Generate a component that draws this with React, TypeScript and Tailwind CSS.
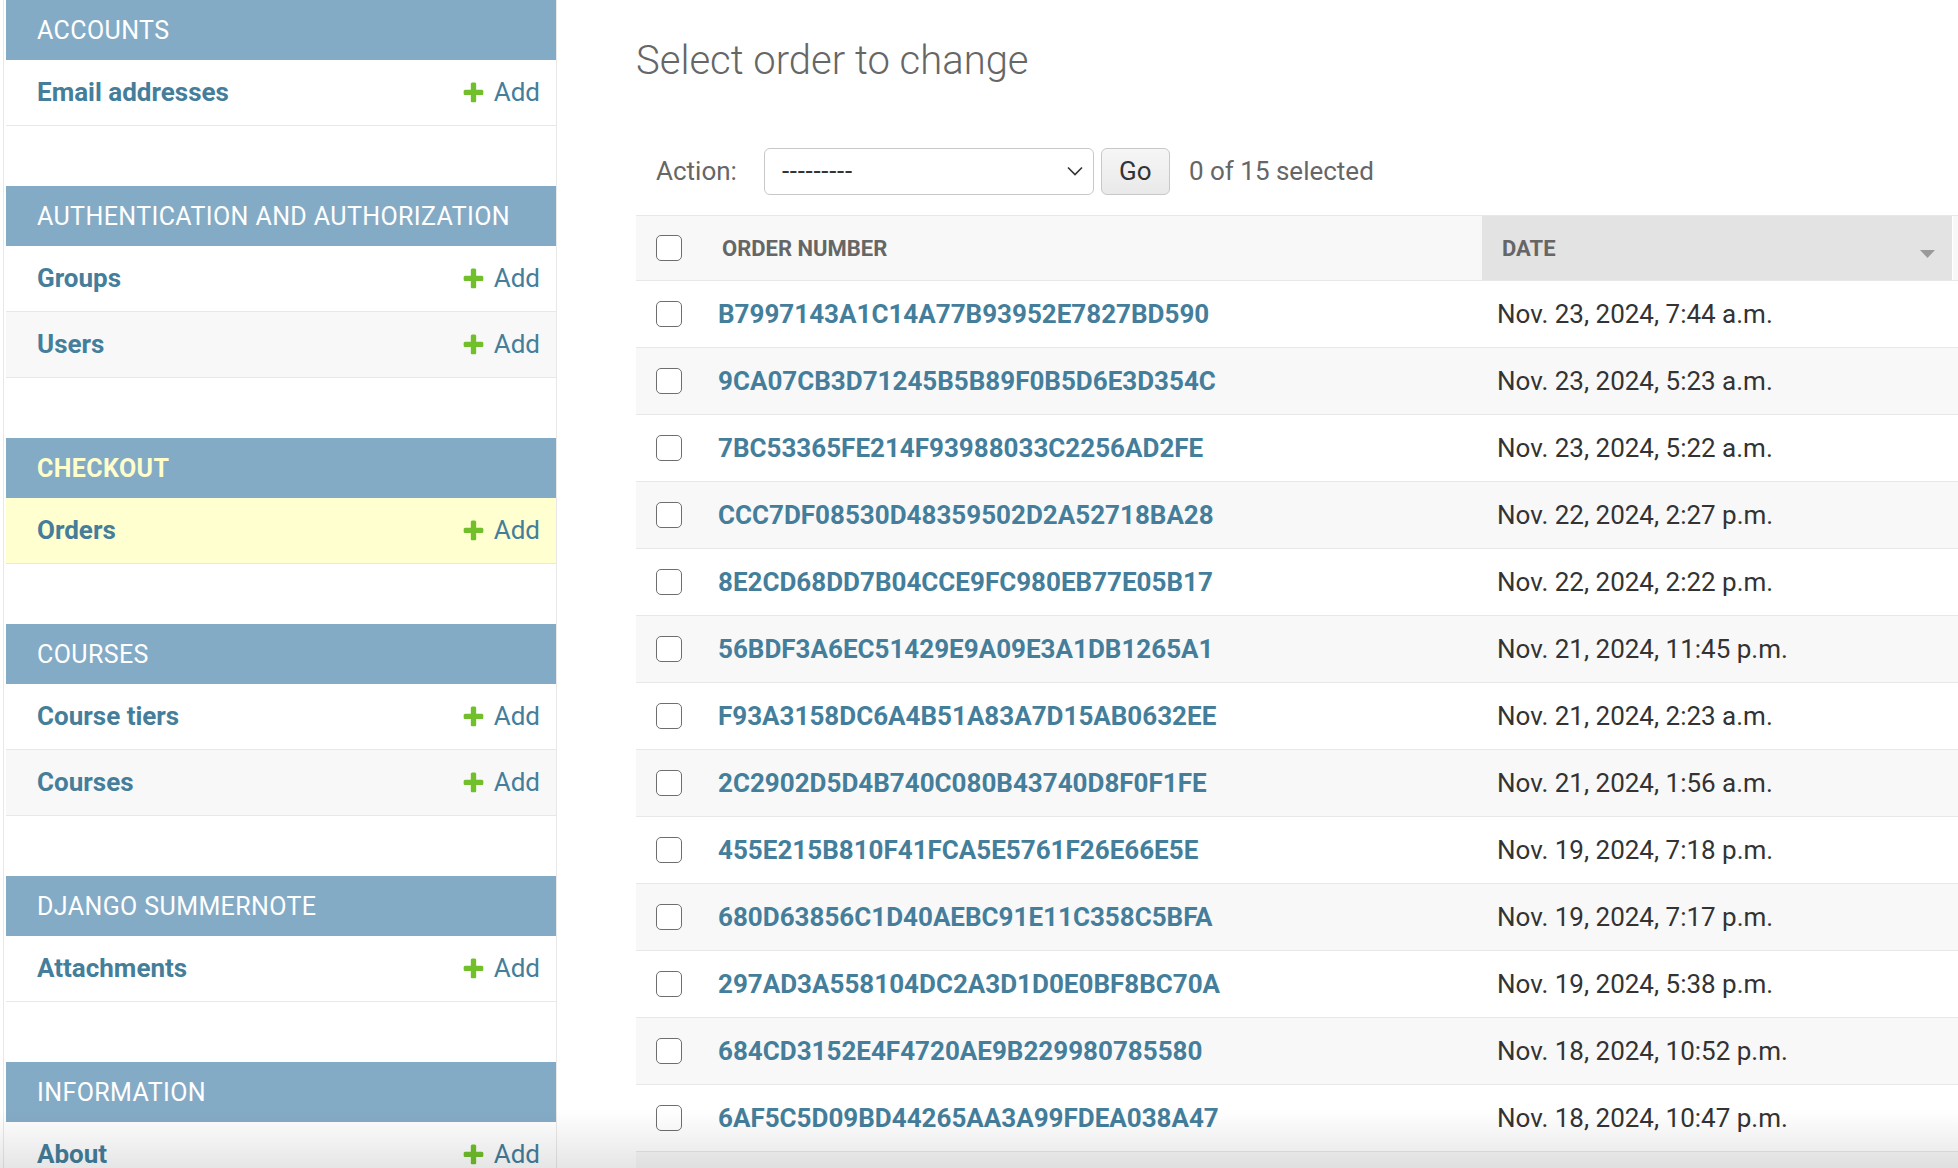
import React from "react";

const PlusIcon = () => (
  <svg width="25" height="25" viewBox="0 0 1792 1792" className="shrink-0">
    <path
      fill="#70bf2b"
      d="M1600 796v192q0 40-28 68t-68 28h-416v416q0 40-28 68t-68 28h-192q-40 0-68-28t-28-68v-416h-416q-40 0-68-28t-28-68v-192q0-40 28-68t68-28h416v-416q0-40 28-68t68-28h192q40 0 68 28t28 68v416h416q40 0 68 28t28 68z"
    />
  </svg>
);

type Mod = { caption: string; current?: boolean; rows: { name: string; selected?: boolean }[] };

const modules: Mod[] = [
  { caption: "Accounts", rows: [{ name: "Email addresses" }] },
  { caption: "Authentication and Authorization", rows: [{ name: "Groups" }, { name: "Users" }] },
  { caption: "Checkout", current: true, rows: [{ name: "Orders", selected: true }] },
  { caption: "Courses", rows: [{ name: "Course tiers" }, { name: "Courses" }] },
  { caption: "Django Summernote", rows: [{ name: "Attachments" }] },
  { caption: "Information", rows: [{ name: "About" }] },
];

const orders: [string, string][] = [
  ["B7997143A1C14A77B93952E7827BD590", "Nov. 23, 2024, 7:44 a.m."],
  ["9CA07CB3D71245B5B89F0B5D6E3D354C", "Nov. 23, 2024, 5:23 a.m."],
  ["7BC53365FE214F93988033C2256AD2FE", "Nov. 23, 2024, 5:22 a.m."],
  ["CCC7DF08530D48359502D2A52718BA28", "Nov. 22, 2024, 2:27 p.m."],
  ["8E2CD68DD7B04CCE9FC980EB77E05B17", "Nov. 22, 2024, 2:22 p.m."],
  ["56BDF3A6EC51429E9A09E3A1DB1265A1", "Nov. 21, 2024, 11:45 p.m."],
  ["F93A3158DC6A4B51A83A7D15AB0632EE", "Nov. 21, 2024, 2:23 a.m."],
  ["2C2902D5D4B740C080B43740D8F0F1FE", "Nov. 21, 2024, 1:56 a.m."],
  ["455E215B810F41FCA5E5761F26E66E5E", "Nov. 19, 2024, 7:18 p.m."],
  ["680D63856C1D40AEBC91E11C358C5BFA", "Nov. 19, 2024, 7:17 p.m."],
  ["297AD3A558104DC2A3D1D0E0BF8BC70A", "Nov. 19, 2024, 5:38 p.m."],
  ["684CD3152E4F4720AE9B229980785580", "Nov. 18, 2024, 10:52 p.m."],
  ["6AF5C5D09BD44265AA3A99FDEA038A47", "Nov. 18, 2024, 10:47 p.m."],
];

const Checkbox = () => (
  <div className="w-[26px] h-[26px] rounded-[5px] border-[1.5px] border-[#6e6e6e] bg-white" />
);

export default function App() {
  return (
    <div className="relative flex h-screen w-full overflow-hidden bg-white font-['Roboto',sans-serif]">
      <aside className="w-[557px] shrink-0 pl-[3px]">
        <div className="h-full border-l border-r border-[#e8e8e8] pl-[2px]">
          {modules.map((m) => (
            <div key={m.caption} className="mb-[60px]">
              <div
                className={
                  m.current
                    ? "flex h-[60px] items-center bg-[#84abc6] pl-[31px] pt-[2px] text-[25px] font-bold uppercase tracking-[0.4px] text-[#ffffcc]"
                    : "flex h-[60px] items-center bg-[#84abc6] pl-[31px] pt-[2px] text-[25px] uppercase tracking-[0.4px] text-white"
                }
              >
                {m.caption}
              </div>
              {m.rows.map((r, i) => (
                <div
                  key={r.name}
                  className={
                    r.selected
                      ? "flex h-[66px] items-center justify-between border-b border-[#e8e8e8] bg-[#ffffd0] pl-[31px] pr-[16px]"
                      : i % 2 === 1
                      ? "flex h-[66px] items-center justify-between border-b border-[#e8e8e8] bg-[#f8f8f8] pl-[31px] pr-[16px]"
                      : "flex h-[66px] items-center justify-between border-b border-[#e8e8e8] bg-white pl-[31px] pr-[16px]"
                  }
                >
                  <span className="text-[26px] font-bold text-[#447e9b]">{r.name}</span>
                  <span className="flex items-center text-[26px] text-[#447e9b]">
                    <PlusIcon />
                    <span className="ml-[8px]">Add</span>
                  </span>
                </div>
              ))}
            </div>
          ))}
        </div>
      </aside>

      <main className="min-w-0 flex-1 pl-[79px] pt-[37px]">
        <h1 className="text-[40px] font-light leading-[48px] text-[#666]">Select order to change</h1>

        <div className="mt-[42px] flex h-[88px] items-center pl-[20px] text-[26px] text-[#666]">
          <span>Action:</span>
          <div className="ml-[27px] flex h-[47px] w-[330px] items-center justify-between rounded-[6px] border-[1.5px] border-[#c8c8c8] bg-white pl-[17px] pr-[10px] text-[#333]">
            <span className="text-[26px] tracking-[0.7px]">---------</span>
            <svg width="16" height="10" viewBox="0 0 16 10">
              <polyline points="1,1.5 8,8.5 15,1.5" fill="none" stroke="#333" strokeWidth="1.6" />
            </svg>
          </div>
          <div className="ml-[7px] flex h-[47px] w-[69px] items-center justify-center rounded-[6px] border-[1.5px] border-[#c8c8c8] bg-linear-to-b from-[#f6f6f6] to-[#e9e9e9] text-[#333]">
            Go
          </div>
          <span className="ml-[19px]">0 of 15 selected</span>
        </div>

        <div className="w-[1400px]">
          <div className="flex h-[66px] items-stretch border-y border-[#e8e8e8] bg-[#f8f8f8]">
            <div className="flex w-[66px] shrink-0 items-center pl-[20px]">
              <Checkbox />
            </div>
            <div className="flex w-[780px] shrink-0 items-center pl-[20px] text-[22px] font-bold text-[#666]">
              ORDER NUMBER
            </div>
            <div className="flex w-[471px] shrink-0 items-center justify-between border-r border-white bg-[#e3e3e3] pl-[20px] pr-[17px] text-[22px] font-bold text-[#666]">
              <span>DATE</span>
              <svg width="15" height="8" viewBox="0 0 15 8" className="mt-[12px]">
                <polygon points="0,0 15,0 7.5,8" fill="#9a9a9a" />
              </svg>
            </div>
            <div className="flex-1" />
          </div>

          {orders.map(([id, date], i) => (
            <div
              key={id}
              className={
                i % 2 === 1
                  ? "flex h-[67px] items-center border-b border-[#e8e8e8] bg-[#f8f8f8]"
                  : "flex h-[67px] items-center border-b border-[#e8e8e8] bg-white"
              }
            >
              <div className="flex w-[66px] shrink-0 items-center pl-[20px]">
                <Checkbox />
              </div>
              <div className="w-[780px] shrink-0 pl-[16px] text-[26px] font-bold text-[#447e9b]">{id}</div>
              <div className="w-[471px] shrink-0 pl-[15px] text-[26px] text-[#333]">{date}</div>
            </div>
          ))}
          <div className="h-[67px] border-b border-[#e8e8e8] bg-[#f8f8f8]" />
        </div>
      </main>

      <div className="pointer-events-none absolute inset-x-0 bottom-0 h-[58px] bg-linear-to-b from-transparent to-black/10" />
    </div>
  );
}
